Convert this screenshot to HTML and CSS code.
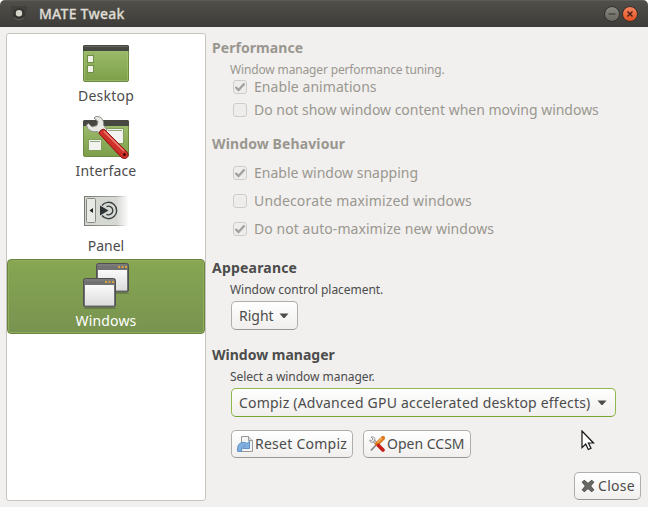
FILE: index.html
```html
<!DOCTYPE html>
<html lang="en">
<head>
<meta charset="utf-8">
<title>MATE Tweak</title>
<link rel="stylesheet" href="styles.css">
</head>
<body>
<div class="window">
  <header class="titlebar">
    <svg class="app-icon" width="16" height="16" viewBox="0 0 16 16"><rect width="16" height="16" fill="#42413d"/><circle cx="8" cy="8" r="6" fill="#353431"/><path d="M3 11.5Q8 16 13 11.5" fill="none" stroke="#67665f"/><circle cx="8" cy="7.3" r="3.2" fill="#d5d4cb"/></svg>
    <h1 class="title t-title">MATE Tweak</h1>
    <div class="controls">
      <svg width="16" height="16" viewBox="0 0 16 16"><defs><linearGradient id="gm" x2="0" y2="1"><stop stop-color="#8b8982"/><stop offset="1" stop-color="#66655f"/></linearGradient></defs><circle cx="8" cy="8" r="7.5" fill="url(#gm)" stroke="#32312d"/><path d="M4.5 8H11.500" stroke="#33322e" stroke-width="1.1"/></svg>
      <svg width="16" height="16" viewBox="0 0 16 16"><defs><linearGradient id="gc" x2="0" y2="1"><stop stop-color="#f78460"/><stop offset="1" stop-color="#e4501f"/></linearGradient></defs><circle cx="8" cy="8" r="7.500" fill="url(#gc)" stroke="#32312d"/><path d="M5.500 5.500L10.500 10.500M10.500 5.500L5.500 10.500" stroke="#46241a" stroke-width="1.5"/></svg>
    </div>
  </header>
  <div class="body">
    <nav class="sidebar">
      <div class="item">
        <svg width="48" height="48" viewBox="0 0 48 48"><defs><linearGradient id="gd" x2="0" y2="1"><stop stop-color="#a0bf70"/><stop offset="1" stop-color="#7d9f49"/></linearGradient></defs>
          <rect x="1.500" y="9.500" width="45" height="36" rx="1.500" fill="url(#gd)" stroke="#6c8a41"/><path d="M2.500 15.500V44.500H45.500V15.500" fill="none" stroke="#a5c375" opacity=".6"/><path d="M1 15V10.500Q1 9 2.500 9H45.500Q47 9 47 10.500V15Z" fill="#484843"/><path d="M2 10.500H46" stroke="#66665f"/><g fill="#f1f1ec" stroke="#718f46"><rect x="5.500" y="19.500" width="6" height="7"/><rect x="5.500" y="29.500" width="6" height="7"/></g></svg>
        <span class="t-desktop">Desktop</span>
      </div>
      <div class="item">
        <svg width="48" height="48" viewBox="0 0 48 48"><defs><linearGradient id="gr" x1="0" y1="1" x2="1" y2="0"><stop stop-color="#a81515"/><stop offset=".5" stop-color="#d0312b"/><stop offset="1" stop-color="#ee5b4e"/></linearGradient></defs>
          <rect x="1.500" y="9.500" width="45" height="36" rx="1.500" fill="url(#gd)" stroke="#6c8a41"/><path d="M1 15V10.500Q1 9 2.500 9H45.500Q47 9 47 10.500V15Z" fill="#484843"/><g fill="#f2f2ee" stroke="#829d59"><rect x="24.500" y="17.500" width="17" height="15"/><rect x="6.500" y="28.500" width="13" height="11"/></g><path d="M26 19.500H40M8 30.500H18" stroke="#93a57a"/>
          <path d="M14 5.500C19 5 22 8.500 21.500 14L25 19 20 24 15.500 20.500C10 21.500 5.500 19.500 4.500 14L6.500 12.500 10 16 15 14.500 16 10.500 12 7Z" fill="#e8e9e5" stroke="#8b8c87"/>
          <path d="M22 18L45.500 41.500Q47.500 46 43.500 47.500Q40 48 37.500 44.500L17 22.500Q17.500 18.500 22 18Z" fill="url(#gr)" stroke="#8c1714"/><path d="M22 20.500L42 40" stroke="#f0897d" stroke-width="1.200"/><circle cx="42.500" cy="43.500" r="1.500" fill="#4c0705"/></svg>
        <span class="t-interface">Interface</span>
      </div>
      <div class="item">
        <svg width="48" height="48" viewBox="0 0 48 48"><defs><linearGradient id="gp"><stop stop-color="#d3d7cf"/><stop offset=".72" stop-color="#d7dad4"/><stop offset="1" stop-color="#fff"/></linearGradient><linearGradient id="gl"><stop stop-color="#777a74"/><stop offset=".72" stop-color="#a4a6a1"/><stop offset="1" stop-color="#fff"/></linearGradient></defs>
          <rect x="2" y="10" width="44" height="30" fill="url(#gl)"/><rect x="3" y="11" width="44" height="28" fill="url(#gp)"/><rect x="4.500" y="12.500" width="9" height="24" rx="1" fill="#e8eae5" stroke="#888b85"/><path d="M11 22V27L7.500 24.500Z" fill="#222"/><path d="M20 19.500A8.200 8.200 0 1 1 20 29.500" fill="none" stroke="#3a4143" stroke-width="1.400"/><path d="M24.500 20.700A4.300 4.300 0 1 1 24.500 28.300" fill="none" stroke="#3a4143" stroke-width="1.400"/><path d="M18 19.500L26.500 24.500 18 29.500Z" fill="#2e3436"/></svg>
        <span class="t-panel">Panel</span>
      </div>
      <div class="item selected">
        <svg width="48" height="48" viewBox="0 0 48 48"><defs><linearGradient id="gw" x2="0" y2="1"><stop stop-color="#fafafa"/><stop offset="1" stop-color="#dcdcdc"/></linearGradient></defs>
          <g id="win"><path d="M15 32.500H47" stroke="#536838" opacity=".5"/><rect x="14.500" y="2.500" width="32" height="28.500" rx="2" fill="#717171" stroke="#505050"/><rect x="16" y="9" width="29" height="20.500" fill="url(#gw)"/><path d="M16 4H45" stroke="#878787"/><path d="M36 6H38M39.500 6H41.500M43 6H45" stroke="#d8a33b" stroke-width="2"/></g><use href="#win" x="-13" y="15"/></svg>
        <span class="t-windows">Windows</span>
      </div>
    </nav>
    <main class="content">
      <section class="group disabled">
        <h2 class="t-perf">Performance</h2>
        <p class="t-tuning">Window manager performance tuning.</p>
        <div class="check first"><i class="box"><svg class="tick" width="12" height="12" viewBox="0 0 12 12"><path d="M1.500 6L4.500 9 10.500 2.500"/></svg></i><span class="t-anim">Enable animations</span></div>
        <div class="check second"><i class="box"></i><span class="t-content">Do not show window content when moving windows</span></div>
      </section>
      <section class="group behaviour disabled">
        <h2 class="t-behav">Window Behaviour</h2>
        <div class="check"><i class="box"><svg class="tick" width="12" height="12" viewBox="0 0 12 12"><path d="M1.500 6L4.500 9 10.500 2.500"/></svg></i><span class="t-snap">Enable window snapping</span></div>
        <div class="check"><i class="box"></i><span class="t-undec">Undecorate maximized windows</span></div>
        <div class="check"><i class="box"><svg class="tick" width="12" height="12" viewBox="0 0 12 12"><path d="M1.500 6L4.500 9 10.500 2.500"/></svg></i><span class="t-auto">Do not auto-maximize new windows</span></div>
      </section>
      <section class="group appearance">
        <h2 class="t-appear">Appearance</h2>
        <p class="t-place">Window control placement.</p>
        <button class="combo right"><span class="t-right">Right</span><svg class="arrow" width="10" height="6" viewBox="0 0 10 6"><path d="M.5 .5H9.500L6 4.600Q5 5.600 4 4.600Z"/></svg></button>
      </section>
      <section class="group manager">
        <h2 class="t-wm">Window manager</h2>
        <p class="t-select">Select a window manager.</p>
        <button class="combo compiz"><span class="t-compiz">Compiz (Advanced GPU accelerated desktop effects)</span><svg class="arrow" width="10" height="6" viewBox="0 0 10 6"><path d="M.5 .5H9.500L6 4.600Q5 5.600 4 4.600Z"/></svg></button>
        <div class="actions">
          <button class="reset"><svg width="16" height="16" viewBox="0 0 16 16"><path d="M4.500 .5H11.500L15.500 4.500V15.500H4.500Z" fill="#f4f4f4" stroke="#999"/><path d="M11.500 .5V4.500H15.500" fill="#ddd" stroke="#999"/><path d="M.6 15.400V11.500Q1.500 6.500 6.500 6.300Q8.500 6.300 10 7.500L12.500 5.200V12.500H5.800L8 10.200Q4.500 9.500 4.500 15.400Z" fill="#7fb0e0" stroke="#4a82bd" stroke-width=".8"/></svg><span class="t-reset">Reset Compiz</span></button>
          <button class="ccsm"><svg width="16" height="16" viewBox="0 0 16 16"><path d="M4 4L13.500 14" stroke="#777" stroke-width="3"/><path d="M4 4L13.500 14" stroke="#e8e8e8" stroke-width="1.400"/><path d="M2 1Q5 0 6 2.500Q6 6 3 6.500Q1 6 .5 4L2.500 4.500 4 3Z" fill="#eee" stroke="#888" stroke-width=".8"/><path d="M2 14.500L8 8" stroke="#888" stroke-width="1.800"/><path d="M8 8L14 2" stroke="#d9771b" stroke-width="4" stroke-linecap="round"/><path d="M8.500 6.800L13 2" stroke="#f7b35e" stroke-width="1.300"/><path d="M9.500 9.500L14 14" stroke="#c82018" stroke-width="3.600" stroke-linecap="round"/></svg><span class="t-open">Open CCSM</span></button>
        </div>
      </section>
      <footer class="footer">
        <button class="close"><svg width="14" height="14" viewBox="0 0 14 14"><path d="M3.200 1.200L7 4.400 10.800 1.200 12.800 3.200 9.600 7 12.800 10.800 10.800 12.800 7 9.600 3.200 12.800 1.200 10.800 4.400 7 1.200 3.200Z" fill="#686864" stroke="#484844"/></svg><span class="t-close">Close</span></button>
      </footer>
    </main>
  </div>
  <svg class="cursor" width="14" height="21" viewBox="0 0 14 21"><path d="M1 1V17.600L4.700 14 7.300 19.500 10 18.200 7.400 13H12.500Z" fill="#fff" stroke="#111" stroke-width="1.200"/></svg>
</div>
</body>
</html>
```
FILE: styles.css
```css
* { box-sizing: border-box; }
body { margin: 0; background: #fff; font: 14px/20px "Noto Sans", "Open Sans", sans-serif; color: #4c4c4c; }
h1, h2, p { margin: 0; }
svg { display: block; flex: none; }
span, h1, h2, p { white-space: nowrap; }
.window { width: 648px; height: 507px; background: #f1f0ee; border-radius: 5px 5px 0 0; overflow: hidden; position: relative; }
.titlebar { height: 27px; display: flex; align-items: center; padding: 0 10px 0 11px; background: linear-gradient(#504f4a, #3d3c38); border-top: 1px solid #5d5c56; }
.title { margin-left: 12px; font-size: 14px; font-weight: 500; color: #dfdbd2; line-height: 24px; -webkit-text-stroke: .3px #dfdbd2; }
.controls { margin-left: auto; display: flex; gap: 2px; }
.body { display: flex; padding: 6px 7px 6px 6px; height: 480px; }
.sidebar { width: 200px; height: 468px; background: #fff; border: 1px solid #c8c4c0; border-radius: 3px; }
.item { height: 75px; padding-top: 2px; display: flex; flex-direction: column; align-items: center; }
.item span { margin-top: 2px; }
.selected { margin: 0; color: #fff; border: 1px solid #6a843d; border-radius: 4px; padding-top: 1px; background: linear-gradient(#87a752, #789350); box-shadow: inset 0 0 0 1px #8fae5b; }
.content { flex: 1; padding: 4px 0 0 6px; display: flex; flex-direction: column; }
.group { display: flex; flex-direction: column; align-items: flex-start; padding-left: 19px; }
h2 { font-size: 14px; line-height: 22px; font-weight: 700; margin-left: -19px; }
p { font-size: 12px; line-height: 18px; margin: 2px 0 0 -1px; }
.disabled { color: #9a9790; }
.check { height: 16px; display: flex; align-items: center; gap: 7px; margin: 12px 0 0 2px; }
.check.first { margin-top: 0; }
.check.second { margin-top: 7px; }
.behaviour { margin-top: 15px; }
h2 + .check { margin-top: 10px; }
.box { width: 14px; height: 14px; border: 1px solid #cfcdca; border-radius: 3px; background: #eeedeb; }
.tick { fill: none; stroke: #a3a19e; stroke-width: 2.4; }
.appearance { margin-top: 20px; }
.manager { margin-top: 14px; }
button { display: flex; align-items: center; height: 29px; padding: 0 7px; font: inherit; line-height: 20px; color: #4c4c4c; border: 1px solid #b0aeab; border-bottom-color: #999794; border-radius: 5px; background: linear-gradient(#fff, #f0efed); }
.combo { margin-top: 2px; justify-content: space-between; padding-right: 8px; }
.arrow { fill: #4c4c4c; }
.right { width: 67px; }
.compiz { width: 385px; border-color: #8fb84e; border-bottom-color: #75a52e; }
.actions { display: flex; gap: 10px; margin-top: 13px; }
.actions button { height: 28px; padding: 0 5px; gap: 2px; }
.reset { width: 122px; }
.ccsm { width: 108px; }
.footer { display: flex; justify-content: flex-end; margin-top: 14px; }
.close { width: 67px; height: 28px; padding: 0 6px; gap: 3px; }
.cursor { position: absolute; left: 581px; top: 430px; }

/* Per-label tracking */
.t-title, .t-desktop, .t-reset { letter-spacing: .25px; }
.t-close { letter-spacing: .3px; }
.t-compiz { letter-spacing: .205px; }
.t-interface, .t-windows, .t-undec { letter-spacing: .15px; }
.t-appear { letter-spacing: .2px; }
.t-behav { letter-spacing: .12px; }
.t-anim, .t-auto, .t-perf { letter-spacing: .06px; }
.t-content { letter-spacing: -.02px; }
.t-tuning { letter-spacing: -.15px; }
.t-place, .t-select { letter-spacing: -.04px; }
```
